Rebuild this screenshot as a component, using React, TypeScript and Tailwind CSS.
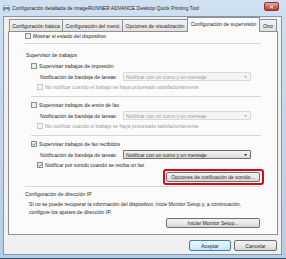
import clsx from "clsx";

const Check = ({ checked = false, disabled = false }: { checked?: boolean; disabled?: boolean }) => (
	<span
		className={clsx(
			"flex h-[6px] w-[6px] shrink-0 items-center justify-center border",
			disabled
				? "border-[#c9c9c9] bg-[#f4f4f4]"
				: "border-[#8e8f8f] bg-gradient-to-br from-[#dcdcdc] to-[#ffffff]",
		)}
	>
		{checked && (
			<svg viewBox="0 0 6 6" className="h-[5px] w-[5px]">
				<path d="M1 3.1L2.4 4.5L5 1.3" stroke="#2b3a4a" strokeWidth="1.1" fill="none" />
			</svg>
		)}
	</span>
);

const Select = ({ disabled = false }: { disabled?: boolean }) => (
	<div
		className={clsx(
			"flex h-[9px] w-[128px] items-center justify-between rounded-[1px] border pl-[2px] pr-[3px]",
			disabled
				? "border-[#d9d9d9] bg-[#f4f4f4] text-[#9a9a9a]"
				: "border-[#707070] bg-gradient-to-b from-[#f3f3f3] to-[#dadada] text-[#1e1e1e]",
		)}
	>
		<span>Notificar con un icono y un mensaje</span>
		<svg viewBox="0 0 4 3" className="h-[2px] w-[3px]">
			<path d="M0 0H4L2 3Z" fill={disabled ? "#a8a8a8" : "#1e1e1e"} />
		</svg>
	</div>
);

const Button = ({ label, className }: { label: string; className?: string }) => (
	<div
		className={clsx(
			"flex items-center justify-center rounded-[2px] border border-[#707070] bg-gradient-to-b from-[#f2f2f2] via-[#e9e9e9] to-[#d4d4d4] text-[#1e1e1e]",
			className,
		)}
	>
		{label}
	</div>
);

const Group = ({
	title,
	disabled = false,
	checked = false,
	second,
	secondChecked = false,
}: {
	title: string;
	disabled?: boolean;
	checked?: boolean;
	second: string;
	secondChecked?: boolean;
}) => (
	<div className="flex flex-col">
		<div className="flex h-[8px] items-center gap-[2px] pl-[6px]">
			<Check checked={checked} />
			<span>{title}</span>
		</div>
		<div className="mt-[2px] flex h-[9px] items-center pl-[15px]">
			<span className="w-[83px]">Notificación de bandeja de tareas:</span>
			<Select disabled={disabled} />
		</div>
		<div className="mt-[2px] flex h-[8px] items-center gap-[2px] pl-[12px]">
			<Check disabled={disabled} checked={secondChecked} />
			<span className={disabled ? "text-[#9a9a9a]" : ""}>{second}</span>
		</div>
	</div>
);

const tabs = [
	{ label: "Configuración básica", w: "w-[54px]" },
	{ label: "Configuración del menú", w: "w-[61px]" },
	{ label: "Opciones de visualización", w: "w-[66px]" },
	{ label: "Configuración de supervisión", w: "w-[73px]", active: true },
	{ label: "Otro", w: "w-[18px]" },
];

export default function App() {
	return (
		<div className="flex h-[259px] w-[286px] flex-col overflow-hidden border-b border-[#3f5670] bg-gradient-to-b from-[#cfe0f2] to-[#b6cde6] font-['Liberation_Sans',Arial,sans-serif] text-[5.1px] leading-[8px] text-[#1e1e1e]">
			{/* title bar */}
			<div className="relative flex h-[16px] shrink-0 items-center pl-[3px]">
				<svg viewBox="0 0 7 7" className="h-[7px] w-[7px]">
					<rect x="1" y="0.5" width="5" height="2.5" fill="#ffffff" stroke="#7d8fa3" strokeWidth="0.5" />
					<rect x="0.3" y="2.5" width="6.4" height="3" rx="0.5" fill="#5e8fc8" stroke="#3c5f8c" strokeWidth="0.5" />
					<rect x="1.5" y="4.5" width="4" height="2" fill="#f4f4f4" stroke="#7d8fa3" strokeWidth="0.4" />
				</svg>
				<span className="ml-[2px]">
					Configuración detallada de imageRUNNER ADVANCE Desktop Quick Printing Tool
				</span>
				<div className="absolute right-[7px] top-[2px] flex h-[9px] w-[15px] items-center justify-center rounded-[2px] border border-[#7d3a33] bg-gradient-to-b from-[#e8a99e] via-[#d4685c] to-[#c3392e]">
					<svg viewBox="0 0 6 5" className="h-[4px] w-[5px]">
						<path d="M1 0.8L5 4.2M5 0.8L1 4.2" stroke="#ffffff" strokeWidth="1.1" />
					</svg>
				</div>
			</div>

			{/* client area */}
			<div className="mb-[3px] ml-[3px] mr-[4px] flex flex-1 flex-col border border-[#8499b0] bg-[#f0f0f0]">
				<div className="relative z-10 -mb-px flex h-[15px] items-end pl-[5px]">
					{tabs.map((t) =>
						t.active ? (
							<div
								key={t.label}
								className={clsx(
									"-ml-px flex h-[15px] items-start justify-center border border-b-0 border-[#8e8f8f] bg-[#fbfbfb] pt-[2px]",
									t.w,
								)}
							>
								{t.label}
							</div>
						) : (
							<div
								key={t.label}
								className={clsx(
									"-ml-px mb-px flex h-[12px] items-center justify-center border border-b-0 border-[#8e8f8f] bg-gradient-to-b from-[#f3f3f3] to-[#e1e1e1] first:ml-0",
									t.w,
								)}
							>
								{t.label}
							</div>
						),
					)}
				</div>

				<div className="ml-[4px] flex w-[270px] flex-col border border-[#8e8f8f] bg-[#fbfbfb] px-[16px] pb-[6px]">
					<div className="flex h-[7px] items-center gap-[2px]">
						<Check />
						<span>Mostrar el estado del dispositivo</span>
					</div>
					<div className="mt-[4px] h-px bg-[#d5d5d5]" />
					<div className="mt-[7px] flex h-[8px] items-center pl-[1px]">Supervisor de trabajos</div>

					<div className="mt-[3px]">
						<Group
							title="Supervisar trabajos de impresión"
							disabled
							second="No notificar cuando el trabajo se haya procesado satisfactoriamente"
						/>
					</div>
					<div className="ml-[6px] mt-[5px] h-px bg-[#d5d5d5]" />
					<div className="mt-[4px]">
						<Group
							title="Supervisar trabajos de envío de fax"
							disabled
							second="No notificar cuando el trabajo se haya procesado satisfactoriamente"
						/>
					</div>
					<div className="ml-[6px] mt-[5px] h-px bg-[#d5d5d5]" />
					<div className="mt-[4px]">
						<Group
							title="Supervisar trabajos de fax recibidos"
							checked
							second="Notificar por sonido cuando se reciba un fax"
							secondChecked
						/>
					</div>

					<div className="relative mr-[1px] mt-[3px] self-end">
						<Button label="Opciones de notificación de sonido..." className="h-[10px] w-[94px]" />
						<div className="absolute -bottom-[3px] -left-[3px] -right-[4px] -top-[3px] rounded-[3px] border-2 border-[#e8000f]" />
					</div>

					<div className="mt-[4px] h-px bg-[#d5d5d5]" />
					<div className="mt-[3px] flex h-[8px] items-center">Configuración de dirección IP</div>
					<div className="mt-[2px] pl-[4px]">
						Si no se puede recuperar la información del dispositivo, inicie Monitor Setup y, a continuación,
						<br />
						configure los ajustes de dirección IP.
					</div>
					<Button label="Iniciar Monitor Setup..." className="mr-[1px] mt-[2px] h-[10px] w-[94px] self-end" />
				</div>

				<div className="mt-[5px] flex justify-end gap-[3px] pr-[4px]">
					<div className="flex h-[11px] w-[42px] items-center justify-center rounded-[2px] border border-[#3c7fb1] bg-gradient-to-b from-[#eaf6fd] via-[#d9f0fc] to-[#bee6fd]">
						Aceptar
					</div>
					<Button label="Cancelar" className="h-[11px] w-[43px]" />
				</div>
			</div>
		</div>
	);
}
